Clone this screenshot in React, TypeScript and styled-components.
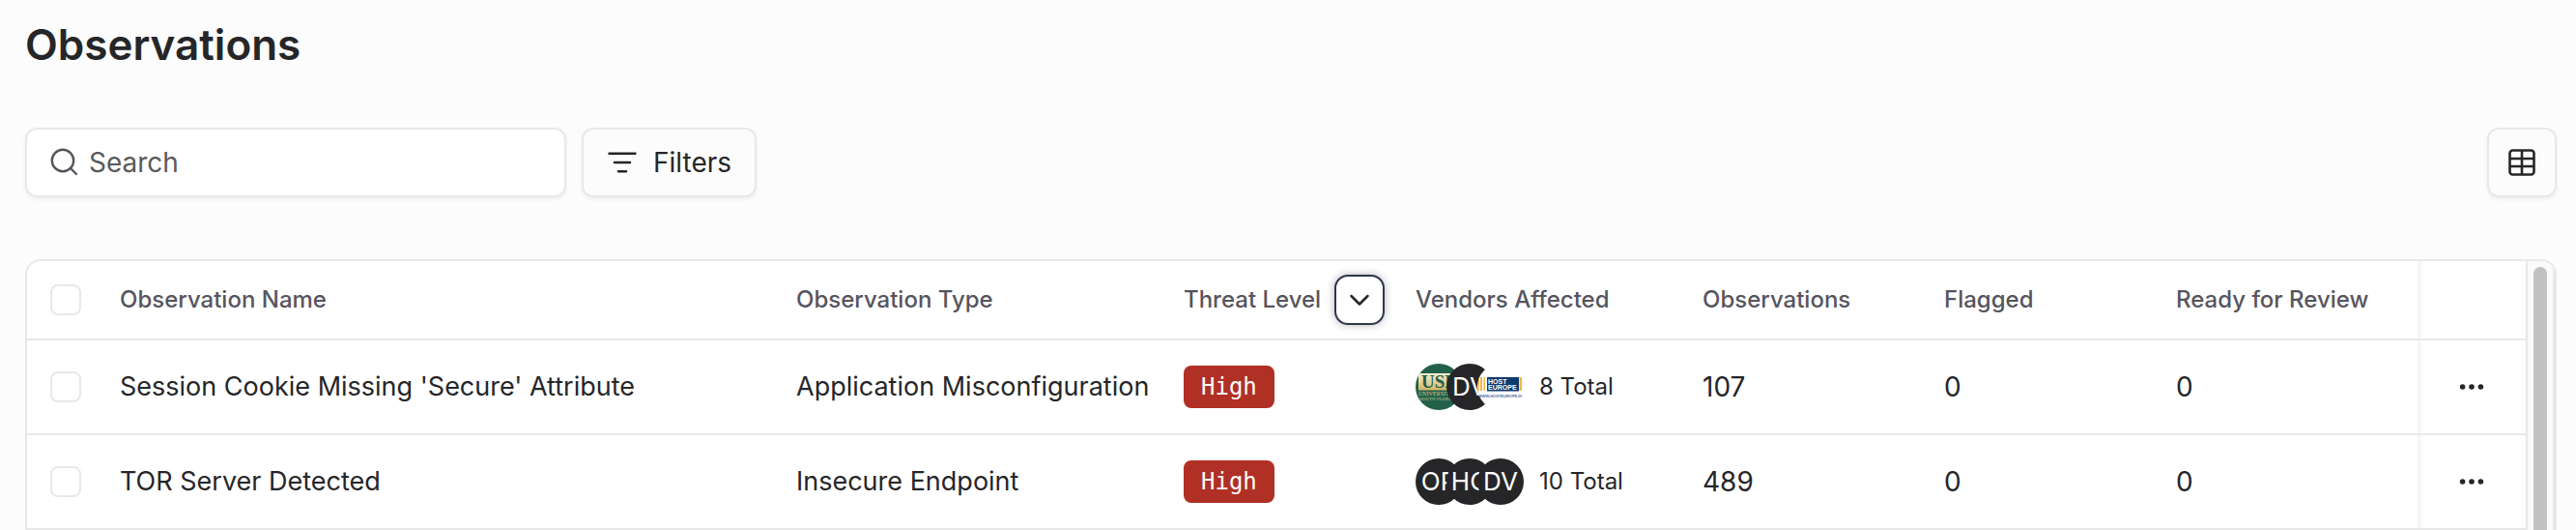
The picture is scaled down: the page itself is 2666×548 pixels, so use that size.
import React from "react";
import styled, { createGlobalStyle } from "styled-components";

const GlobalStyle = createGlobalStyle`
  * { box-sizing: border-box; }
  body {
    margin: 0;
    background: #fcfcfc;
    color: #262628;
    font-family: Inter, "Liberation Sans", sans-serif;
    font-size: 28px;
    line-height: 40px;
  }
`;

const Page = styled.main`
  padding: 16px 20px 0 26px;
`;

const Title = styled.h1`
  margin: 0;
  font-size: 44px;
  line-height: 60px;
  font-weight: 600;
`;

const Toolbar = styled.div`
  display: flex;
  align-items: center;
  gap: 16px;
  margin: 56px 0 64px;
`;

const controlFrame = `
  height: 72px;
  border: 2px solid #e8e8e8;
  border-radius: 12px;
  box-shadow: 0 2px 4px rgba(0, 0, 0, 0.06);
`;

const SearchField = styled.label`
  ${controlFrame}
  display: flex;
  align-items: center;
  gap: 10px;
  width: 560px;
  padding: 0 24px;
  background: #fff;
  color: #56555e;
`;

const SearchInput = styled.input`
  flex: 1;
  min-width: 0;
  padding: 0;
  border: 0;
  outline: 0;
  background: transparent;
  font: inherit;
  color: #262628;
  &::placeholder { color: #5a5a5a; opacity: 1; }
`;

const ToolButton = styled.button<{ $square?: boolean }>`
  ${controlFrame}
  display: flex;
  align-items: center;
  justify-content: center;
  gap: 16px;
  width: ${(p) => (p.$square ? "72px" : "auto")};
  margin-left: ${(p) => (p.$square ? "auto" : "0")};
  padding: ${(p) => (p.$square ? "0" : "0 24px")};
  background: #fcfcfc;
  font: inherit;
  color: #262628;
`;

const TableFrame = styled.div`
  display: flex;
  border: 2px solid #e8e8e8;
  border-bottom: 0;
  border-radius: 16px 16px 0 0;
  background: #fff;
  overflow: hidden;
`;

const Table = styled.table`
  flex: 1;
  width: 100%;
  min-width: 0;
  border-collapse: separate;
  border-spacing: 0;
  table-layout: fixed;
`;

const Column = styled.col<{ $width?: number }>`
  width: ${(p) => (p.$width ? `${p.$width}px` : "auto")};
`;

const HeadCell = styled.th`
  height: 82px;
  padding: 0 16px;
  border-bottom: 2px solid #e8e8e8;
  text-align: left;
  font-size: 24px;
  line-height: 32px;
  font-weight: 500;
  color: #56555e;
  white-space: nowrap;
`;

const Cell = styled.td`
  height: 98px;
  padding: 0 16px;
  border-bottom: 2px solid #e8e8e8;
  white-space: nowrap;
`;

const TextCell = styled(Cell)`
  font-size: 27px;
`;

const CheckHead = styled(HeadCell)`
  padding: 0 24px;
`;

const CheckCell = styled(Cell)`
  padding: 0 24px;
`;

const pinned = `
  background: linear-gradient(to right, #f3f3f3, #fff 6px);
`;

const PinnedHead = styled(HeadCell)`
  ${pinned}
`;

const PinnedCell = styled(Cell)`
  ${pinned}
`;

const Checkbox = styled.input`
  display: block;
  appearance: none;
  width: 32px;
  height: 32px;
  margin: 0;
  border: 2px solid #e8e8e8;
  border-radius: 8px;
  background: #fff;
`;

const SortGroup = styled.div`
  display: flex;
  align-items: center;
  gap: 14px;
`;

const SortButton = styled.button`
  display: flex;
  align-items: center;
  justify-content: center;
  width: 52px;
  height: 52px;
  padding: 0;
  border: 2px solid #2d3748;
  border-radius: 14px;
  background: #fff;
  color: #262628;
  box-shadow: 0 0 8px rgba(0, 0, 0, 0.3);
`;

const Badge = styled.span`
  display: block;
  width: max-content;
  padding: 0 18px;
  border-radius: 8px;
  background: #b13025;
  color: #fff;
  font-family: "DejaVu Sans Mono", monospace;
  font-size: 24px;
  line-height: 44px;
`;

const Vendors = styled.div`
  display: flex;
  align-items: center;
  gap: 16px;
  font-size: 24px;
`;

const AvatarStack = styled.div`
  display: flex;
`;

const Avatar = styled.span<{ $logo: boolean }>`
  display: flex;
  align-items: center;
  justify-content: center;
  width: 48px;
  height: 48px;
  border-radius: 50%;
  overflow: hidden;
  background: ${(p) => (p.$logo ? "transparent" : "#262628")};
  color: #fff;
  font-size: 26px;
  & + & { margin-left: -16px; }
`;

const MenuButton = styled.button`
  display: flex;
  align-items: center;
  justify-content: center;
  width: 48px;
  height: 48px;
  margin: 0 auto;
  padding: 0;
  border: 0;
  background: transparent;
  color: #262628;
`;

const ScrollTrack = styled.div`
  display: flex;
  flex: none;
  width: 30px;
  padding: 6px 6px 0;
  border: solid #e8e8e8;
  border-width: 0 2px;
  background: #fafafa;
`;

const ScrollThumb = styled.div`
  flex: 1;
  border-radius: 8px 8px 0 0;
  background: #c1c1c1;
`;

const SearchIcon = () => (
  <svg width="30" height="30" viewBox="0 0 30 30" fill="none" stroke="currentColor" strokeWidth="2.4" strokeLinecap="round">
    <circle cx="13" cy="13" r="11.2" />
    <path d="M21 21l6 6" />
  </svg>
);

const FilterIcon = () => (
  <svg width="32" height="28" viewBox="0 0 32 28" fill="none" stroke="currentColor" strokeWidth="2.6" strokeLinecap="round">
    <path d="M2.600 4.700h26.800M8 14h16M12 23.300h8" />
  </svg>
);

const GridIcon = () => (
  <svg width="28" height="28" viewBox="0 0 28 28" fill="none" stroke="currentColor" strokeWidth="2.6">
    <rect x="1.500" y="1.500" width="25" height="25" rx="3" />
    <path d="M14 1.500v25M1.500 10h25M1.500 18h25" />
  </svg>
);

const ChevronIcon = () => (
  <svg width="24" height="24" viewBox="0 0 24 24" fill="none" stroke="currentColor" strokeWidth="2.5" strokeLinecap="round" strokeLinejoin="round">
    <path d="M3.500 8l8.500 8.500L20.500 8" />
  </svg>
);

const DotsIcon = () => (
  <svg width="28" height="28" viewBox="0 0 28 28" fill="currentColor">
    <circle cx="4.600" cy="14" r="2.800" />
    <circle cx="14" cy="14" r="2.800" />
    <circle cx="23.400" cy="14" r="2.800" />
  </svg>
);

const UsfLogo = () => (
  <svg width="48" height="48" viewBox="0 0 48 48" role="img" aria-label="University of South Florida">
    <defs>
      <linearGradient id="usfGold" x1="0" y1="0" x2="0" y2="1">
        <stop offset="0" stopColor="#f6f1d2" />
        <stop offset="1" stopColor="#cfb468" />
      </linearGradient>
    </defs>
    <rect width="48" height="48" fill="#22604a" />
    <rect x="3" y="10" width="45" height="17.500" fill="url(#usfGold)" />
    <g fontFamily="Liberation Serif, serif">
      <text x="6" y="25" fontSize="19" fontWeight="700" fill="#22604a">USF</text>
      <text x="3" y="33" fontSize="6" fill="#c9c79a">UNIVERSITY OF</text>
      <text x="4" y="38" fontSize="5" fill="#c9c79a">SOUTH FLORIDA</text>
    </g>
  </svg>
);

const HostEuropeLogo = () => (
  <svg width="48" height="48" viewBox="0 0 48 48" role="img" aria-label="Host Europe">
    <rect width="48" height="48" fill="#fff" />
    <path fill="#f2b544" d="M1 14h1v14H1zM3 14h2v14H3zM6.500 14h1.500v14H6.500zM43.500 14H46v14h-2.500z" />
    <rect x="10" y="14" width="33" height="14.500" fill="#0f3a6e" />
    <g fontFamily="Liberation Sans, sans-serif">
      <text x="11" y="20.500" fontSize="7" fontWeight="700" fill="#fff">HOST</text>
      <text x="11" y="27" fontSize="7" fontWeight="700" fill="#fff">EUROPE</text>
      <text x="1" y="34.500" fontSize="4" fontWeight="700" fill="#4a6f9f">WWW.HOSTEUROPE.DE</text>
    </g>
  </svg>
);

type Observation = {
  name: string;
  type: string;
  level: string;
  vendors: React.ReactNode[];
  vendorTotal: number;
  observations: number;
  flagged: number;
  ready: number;
};

const rows: Observation[] = [
  {
    name: "Session Cookie Missing 'Secure' Attribute",
    type: "Application Misconfiguration",
    level: "High",
    vendors: [<UsfLogo />, "DV", <HostEuropeLogo />],
    vendorTotal: 8,
    observations: 107,
    flagged: 0,
    ready: 0,
  },
  {
    name: "TOR Server Detected",
    type: "Insecure Endpoint",
    level: "High",
    vendors: ["OP", "HC", "DV"],
    vendorTotal: 10,
    observations: 489,
    flagged: 0,
    ready: 0,
  },
];

export default function App() {
  return (
    <Page>
      <GlobalStyle />
      <Title>Observations</Title>
      <Toolbar>
        <SearchField>
          <SearchIcon />
          <SearchInput type="text" placeholder="Search" aria-label="Search" />
        </SearchField>
        <ToolButton type="button">
          <FilterIcon />
          Filters
        </ToolButton>
        <ToolButton type="button" $square aria-label="Table columns">
          <GridIcon />
        </ToolButton>
      </Toolbar>
      <TableFrame>
        <Table>
          <colgroup>
            <Column $width={80} />
            <Column />
            <Column $width={401} />
            <Column $width={240} />
            <Column $width={297} />
            <Column $width={250} />
            <Column $width={240} />
            <Column $width={266} />
            <Column $width={112} />
          </colgroup>
          <thead>
            <tr>
              <CheckHead>
                <Checkbox type="checkbox" aria-label="Select all observations" />
              </CheckHead>
              <HeadCell>Observation Name</HeadCell>
              <HeadCell>Observation Type</HeadCell>
              <HeadCell>
                <SortGroup>
                  Threat Level
                  <SortButton type="button" aria-label="Sort by threat level">
                    <ChevronIcon />
                  </SortButton>
                </SortGroup>
              </HeadCell>
              <HeadCell>Vendors Affected</HeadCell>
              <HeadCell>Observations</HeadCell>
              <HeadCell>Flagged</HeadCell>
              <HeadCell>Ready for Review</HeadCell>
              <PinnedHead aria-label="Actions" />
            </tr>
          </thead>
          <tbody>
            {rows.map((row) => (
              <tr key={row.name}>
                <CheckCell>
                  <Checkbox type="checkbox" aria-label={`Select ${row.name}`} />
                </CheckCell>
                <TextCell>{row.name}</TextCell>
                <TextCell>{row.type}</TextCell>
                <Cell>
                  <Badge>{row.level}</Badge>
                </Cell>
                <Cell>
                  <Vendors>
                    <AvatarStack>
                      {row.vendors.map((vendor, i) => (
                        <Avatar key={i} $logo={typeof vendor !== "string"}>
                          {vendor}
                        </Avatar>
                      ))}
                    </AvatarStack>
                    {`${row.vendorTotal} Total`}
                  </Vendors>
                </Cell>
                <Cell>{row.observations}</Cell>
                <Cell>{row.flagged}</Cell>
                <Cell>{row.ready}</Cell>
                <PinnedCell>
                  <MenuButton type="button" aria-label={`Actions for ${row.name}`}>
                    <DotsIcon />
                  </MenuButton>
                </PinnedCell>
              </tr>
            ))}
          </tbody>
        </Table>
        <ScrollTrack>
          <ScrollThumb />
        </ScrollTrack>
      </TableFrame>
    </Page>
  );
}
